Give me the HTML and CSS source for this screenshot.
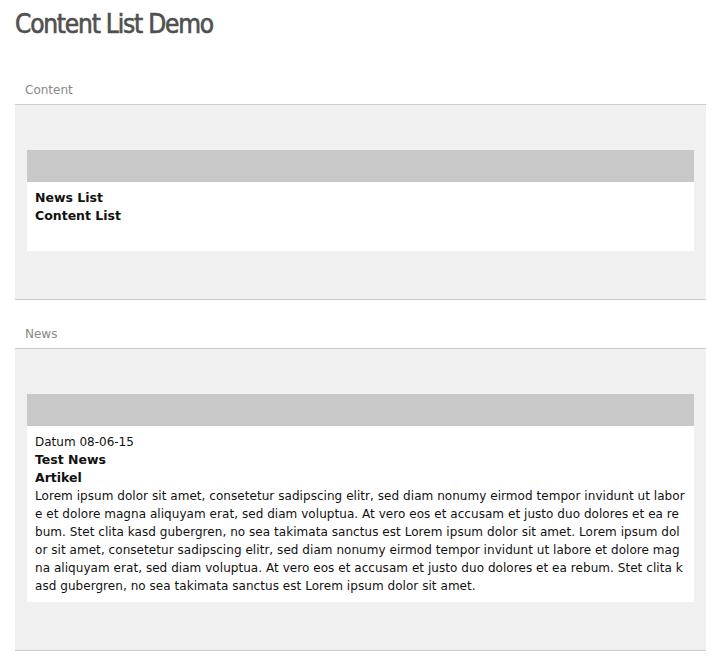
FILE: index.html
```html
<!DOCTYPE html>
<html>
<head>
<meta charset="utf-8">
<title>Content List Demo</title>
<link rel="stylesheet" href="styles.css">
</head>
<body>
<div class="page">
  <h1 class="title">Content List Demo</h1>

  <section class="block block-first">
    <div class="block-label">Content</div>
    <div class="block-body">
      <div class="panel">
        <div class="panel-head"></div>
        <div class="panel-content">
          <ul class="link-list">
            <li>News List</li>
            <li>Content List</li>
          </ul>
        </div>
      </div>
    </div>
  </section>

  <section class="block">
    <div class="block-label">News</div>
    <div class="block-body">
      <div class="panel">
        <div class="panel-head"></div>
        <div class="panel-content">
          <div class="news-date">Datum 08-06-15</div>
          <div class="news-title">Test News</div>
          <div class="news-title">Artikel</div>
          <p class="news-text">Lorem ipsum dolor sit amet, consetetur sadipscing elitr, sed diam nonumy eirmod tempor invidunt ut labore et dolore magna aliquyam erat, sed diam voluptua. At vero eos et accusam et justo duo dolores et ea rebum. Stet clita kasd gubergren, no sea takimata sanctus est Lorem ipsum dolor sit amet. Lorem ipsum dolor sit amet, consetetur sadipscing elitr, sed diam nonumy eirmod tempor invidunt ut labore et dolore magna aliquyam erat, sed diam voluptua. At vero eos et accusam et justo duo dolores et ea rebum. Stet clita kasd gubergren, no sea takimata sanctus est Lorem ipsum dolor sit amet.</p>
        </div>
      </div>
    </div>
  </section>
</div>
</body>
</html>
```

FILE: styles.css
```css
html, body {
  margin: 0;
  padding: 0;
  background: #ffffff;
}

body {
  font-family: "DejaVu Sans", Verdana, sans-serif;
  font-size: 12px;
  line-height: 18px;
  color: #111111;
}

.page {
  padding: 0 20px 0 15px;
}

.title {
  margin: 0;
  padding-top: 8px;
  height: 32px;
  font-family: "DejaVu Sans Condensed", "DejaVu Sans", sans-serif;
  font-stretch: condensed;
  font-weight: normal;
  font-size: 26px;
  line-height: 32px;
  color: #505050;
  letter-spacing: -1.2px;
  -webkit-text-stroke: 0.6px #505050;
}

.block-first {
  margin-top: 40px;
}

.block {
  border-bottom: 1px solid #cccccc;
}

.block + .block {
  margin-top: 24px;
}

.block-label {
  padding: 0 10px;
  height: 24px;
  line-height: 20px;
  font-size: 12px;
  color: #888888;
  border-bottom: 1px solid #cccccc;
}

.block-body {
  background: #f0f0f0;
  padding: 45px 12px 48px;
}

.panel-head {
  height: 32px;
  background: #c8c8c8;
}

.panel-content {
  background: #ffffff;
  padding: 7px 8px 7px;
}

.link-list {
  list-style: none;
  margin: 0 0 19px;
  padding: 0;
  font-weight: bold;
  font-size: 12.5px;
}

.news-title {
  font-weight: bold;
  font-size: 12.5px;
}

.news-text {
  margin: 0;
  word-break: break-all;
  letter-spacing: 0.05px;
}
```
